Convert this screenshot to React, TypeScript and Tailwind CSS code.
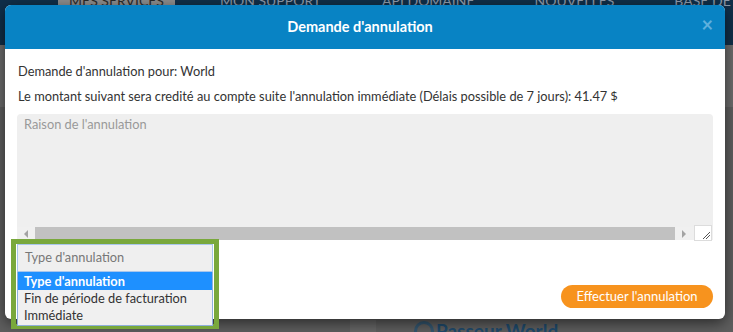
import React from "react";

export default function App() {
  const font = { fontFamily: "Lato, 'Noto Sans', sans-serif" };
  return (
    <div className="relative w-[733px] h-[332px] overflow-hidden bg-[#626262]" style={font}>
      {/* background page */}
      <div className="flex flex-col h-full">
        <div className="h-[45px] bg-[#102f49] flex items-start text-[14px] uppercase whitespace-nowrap overflow-hidden">
          <div className="ml-[58px] w-[117px] h-[14px] -mt-[6px] bg-[#8c8c8c] text-[#2a2a2a] text-center leading-[14px] rounded-b-[3px] shrink-0">Mes services</div>
          <div className="ml-[45px] -mt-[6px] leading-[14px] text-[#8d9aaa] shrink-0">Mon support</div>
          <div className="ml-[61px] -mt-[6px] leading-[14px] text-[#8d9aaa] shrink-0">API Domaine</div>
          <div className="ml-[60px] -mt-[6px] leading-[14px] text-[#8d9aaa] shrink-0">Nouvelles</div>
          <div className="ml-[60px] -mt-[6px] leading-[14px] text-[#8d9aaa] shrink-0">Base de connaissances</div>
        </div>
        <div className="h-[62px] bg-[#6b6b6b]" />
        <div className="flex-1 bg-[#5e5e5e] flex items-end">
          <div className="ml-[350px] w-[26px] h-[12px] bg-[#666]" />
          <div className="ml-[38px] flex items-start h-[12px] overflow-visible">
            <div className="w-[20px] h-[20px] rounded-full border-[3px] border-[#34566f] mt-[1px]" />
            <div className="ml-[2px] text-[19px] font-bold text-[#1f4a6c] leading-[20px] mt-[1px] whitespace-nowrap">Passeur World</div>
          </div>
        </div>
      </div>

      {/* modal */}
      <div className="absolute left-[5px] top-[5px] w-[720px] h-[314px] bg-white rounded-[6px] shadow-[0_4px_14px_rgba(0,0,0,0.55)] flex flex-col">
        <div className="h-[44px] bg-[#0883c4] rounded-t-[6px] flex items-center relative">
          <div className="flex-1 text-center text-white font-bold text-[14.5px] pr-[10px]">Demande d'annulation</div>
          <div className="absolute right-[12px] top-[9px] text-[#5fb0dd] text-[20px] font-bold leading-[20px]">×</div>
        </div>
        <div className="flex-1 flex flex-col px-[12px] pt-[12px] text-[12.8px] text-[#333]">
          <div className="leading-[20px] pl-[1px]">Demande d'annulation pour: World</div>
          <div className="leading-[20px] mt-[5px] pl-[1px]">
            Le montant suivant sera credité au compte suite l'annulation immédiate (Délais possible de 7 jours): 41.47{" "}
            <span style={{ fontFamily: "'Open Sans', sans-serif" }} className="text-[#333]">$</span>
          </div>
          <div className="mt-[8px] h-[126px] bg-[#efefef] rounded-[4px] flex flex-col">
            <div className="flex-1 px-[7px] pt-[1px] text-[#999] leading-[18px]">Raison de l'annulation</div>
            <div className="h-[13px] flex items-center bg-[#f0f0f0]">
              <div className="w-[18px] flex justify-center">
                <div className="w-0 h-0 border-y-[4px] border-y-transparent border-r-[4px] border-r-[#a3a3a3]" />
              </div>
              <div className="w-[640px] h-[13px] bg-[#c1c1c1]" />
              <div className="w-[18px] flex justify-center">
                <div className="w-0 h-0 border-y-[4px] border-y-transparent border-l-[4px] border-l-[#a3a3a3]" />
              </div>
              <div className="ml-[1px] w-[18px] h-[16px] -mt-[2px] bg-white border border-[#dcdcdc] flex items-end justify-end">
                <svg width="10" height="10" viewBox="0 0 10 10">
                  <path d="M9 2 L2 9 M9 5 L5 9" stroke="#555" strokeWidth="1" />
                </svg>
              </div>
            </div>
          </div>
          <div className="relative mt-[4px] w-[196px] h-[28px]">
            <div className="absolute -left-[6px] -top-[5px] w-[208px] h-[90px] border-[5px] border-[#79a83c]" />
            <div className="relative h-[28px] bg-[#efefef] border border-[#a9c6ec] px-[7px] flex items-center text-[#777]">Type d'annulation</div>
            <div className="absolute left-0 top-[28px] w-[196px] bg-[#f0f0f0] border border-[#8fb0dc] border-t-0 flex flex-col leading-[17px] pb-[1px]">
              <div className="bg-[#1e90ff] text-white font-bold px-[6px] h-[18px] flex items-center">Type d'annulation</div>
              <div className="px-[6px] text-[#333]">Fin de période de facturation</div>
              <div className="px-[6px] text-[#333]">Immédiate</div>
            </div>
          </div>
          <div className="flex justify-end mt-[13px]">
            <div className="h-[23px] w-[152px] rounded-full bg-[#f7931e] text-white flex items-center justify-center text-[13px]">Effectuer l'annulation</div>
          </div>
        </div>
      </div>
    </div>
  );
}
